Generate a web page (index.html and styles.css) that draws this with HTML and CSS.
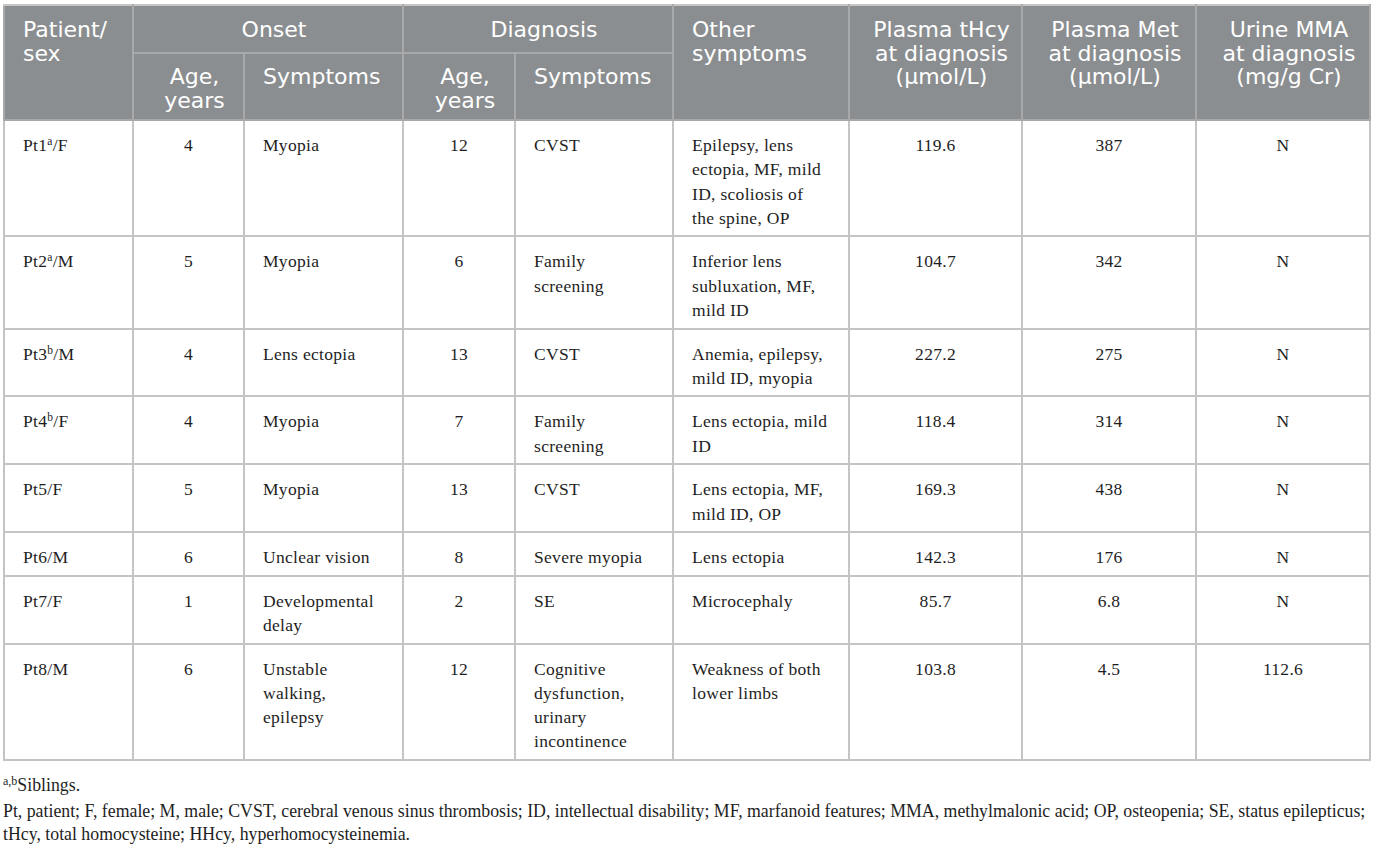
FILE: index.html
```html
<!DOCTYPE html>
<html lang="en">
<head>
<meta charset="utf-8">
<title>Patient table</title>
<link rel="stylesheet" href="styles.css">
</head>
<body>
<div class="wrap">
<table class="data">
  <colgroup>
    <col class="c1"><col class="c2"><col class="c3"><col class="c4"><col class="c5"><col class="c6"><col class="c7"><col class="c8"><col class="c9">
  </colgroup>
  <thead>
    <tr class="h1">
      <th rowspan="2" class="left">Patient/<br>sex</th>
      <th colspan="2">Onset</th>
      <th colspan="2">Diagnosis</th>
      <th rowspan="2" class="left">Other<br>symptoms</th>
      <th rowspan="2">Plasma tHcy<br>at diagnosis<br>(μmol/L)</th>
      <th rowspan="2">Plasma Met<br>at diagnosis<br>(μmol/L)</th>
      <th rowspan="2">Urine MMA<br>at diagnosis<br>(mg/g Cr)</th>
    </tr>
    <tr class="h2">
      <th>Age,<br>years</th>
      <th class="left">Symptoms</th>
      <th>Age,<br>years</th>
      <th class="left">Symptoms</th>
    </tr>
  </thead>
  <tbody>
    <tr>
      <td>Pt1<sup>a</sup>/F</td><td class="c">4</td><td>Myopia</td><td class="c">12</td><td>CVST</td>
      <td>Epilepsy, lens<br>ectopia, MF, mild<br>ID, scoliosis of<br>the spine, OP</td>
      <td class="c">119.6</td><td class="c">387</td><td class="c">N</td>
    </tr>
    <tr>
      <td>Pt2<sup>a</sup>/M</td><td class="c">5</td><td>Myopia</td><td class="c">6</td><td>Family<br>screening</td>
      <td>Inferior lens<br>subluxation, MF,<br>mild ID</td>
      <td class="c">104.7</td><td class="c">342</td><td class="c">N</td>
    </tr>
    <tr>
      <td>Pt3<sup>b</sup>/M</td><td class="c">4</td><td>Lens ectopia</td><td class="c">13</td><td>CVST</td>
      <td>Anemia, epilepsy,<br>mild ID, myopia</td>
      <td class="c">227.2</td><td class="c">275</td><td class="c">N</td>
    </tr>
    <tr>
      <td>Pt4<sup>b</sup>/F</td><td class="c">4</td><td>Myopia</td><td class="c">7</td><td>Family<br>screening</td>
      <td>Lens ectopia, mild<br>ID</td>
      <td class="c">118.4</td><td class="c">314</td><td class="c">N</td>
    </tr>
    <tr>
      <td>Pt5/F</td><td class="c">5</td><td>Myopia</td><td class="c">13</td><td>CVST</td>
      <td>Lens ectopia, MF,<br>mild ID, OP</td>
      <td class="c">169.3</td><td class="c">438</td><td class="c">N</td>
    </tr>
    <tr>
      <td>Pt6/M</td><td class="c">6</td><td>Unclear vision</td><td class="c">8</td><td>Severe myopia</td>
      <td>Lens ectopia</td>
      <td class="c">142.3</td><td class="c">176</td><td class="c">N</td>
    </tr>
    <tr>
      <td>Pt7/F</td><td class="c">1</td><td>Developmental<br>delay</td><td class="c">2</td><td>SE</td>
      <td>Microcephaly</td>
      <td class="c">85.7</td><td class="c">6.8</td><td class="c">N</td>
    </tr>
    <tr>
      <td>Pt8/M</td><td class="c">6</td><td>Unstable<br>walking,<br>epilepsy</td><td class="c">12</td><td>Cognitive<br>dysfunction,<br>urinary<br>incontinence</td>
      <td>Weakness of both<br>lower limbs</td>
      <td class="c">103.8</td><td class="c">4.5</td><td class="c">112.6</td>
    </tr>
  </tbody>
</table>
<div class="notes">
  <p><sup>a,b</sup>Siblings.</p>
  <p>Pt, patient; F, female; M, male; CVST, cerebral venous sinus thrombosis; ID, intellectual disability; MF, marfanoid features; MMA, methylmalonic acid; OP, osteopenia; SE, status epilepticus; tHcy, total homocysteine; HHcy, hyperhomocysteinemia.</p>
</div>
</div>
</body>
</html>
```
FILE: styles.css
```css
html, body {
  margin: 0;
  padding: 0;
  background: #ffffff;
}
.wrap {
  padding: 4px 5px 0 3px;
}
.data {
  width: 1368px;
  table-layout: fixed;
  border-collapse: collapse;
  font-family: "Liberation Serif", "Times New Roman", serif;
  font-size: 17.5px;
  letter-spacing: 0.3px;
  color: #1e1e1e;
}
.c1 { width: 129px; }
.c2 { width: 111px; }
.c3 { width: 159px; }
.c4 { width: 112px; }
.c5 { width: 158px; }
.c6 { width: 176px; }
.c7 { width: 173px; }
.c8 { width: 174px; }
.c9 { width: 174px; }

.data th {
  background: #8b8e90;
  color: #ffffff;
  font-family: "DejaVu Sans", "Open Sans", sans-serif;
  font-weight: normal;
  font-size: 22px;
  letter-spacing: 0;
  line-height: 23.5px;
  text-align: center;
  vertical-align: top;
  padding: 12px 6px 0 18px;
  border: 2px solid #a6a8aa;
}
.data thead tr.h1 th {
  border-top-color: #c6c6c6;
}
.data th.left {
  text-align: left;
}
.data tr.h1 { height: 48px; }
.data tr.h2 { height: 67px; }
.data tr.h2 th {
  padding-top: 11px;
}

.data td {
  border: 2px solid #c4c4c4;
  padding: 12px 18px 5.25px 18px;
  line-height: 24.3px;
  vertical-align: top;
  text-align: left;
}
.data td.c {
  text-align: center;
  padding-left: 10px;
  padding-right: 10px;
}
.data sup {
  font-size: 11.5px;
  line-height: 0;
  vertical-align: 6px;
}

.notes {
  font-family: "Liberation Serif", "Times New Roman", serif;
  font-size: 17.8px;
  color: #1e1e1e;
  padding-top: 13px;
}
.notes p {
  margin: 0 0 3px 0;
  line-height: 23px;
}
.notes sup {
  font-size: 12px;
  line-height: 0;
  vertical-align: 6px;
}
```
